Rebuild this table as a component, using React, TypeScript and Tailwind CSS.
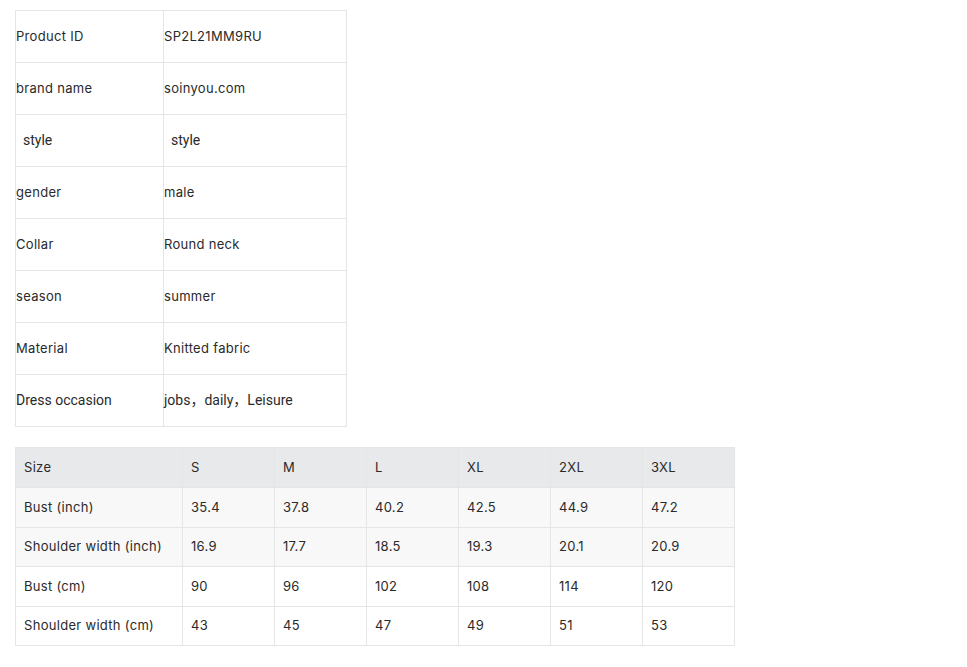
const specs: [string, string, boolean?][] = [
  ['Product ID', 'SP2L21MM9RU'],
  ['brand name', 'soinyou.com'],
  ['\u00a0\u00a0style', '\u00a0\u00a0style', true],
  ['gender', 'male'],
  ['Collar', 'Round neck'],
  ['season', 'summer'],
  ['Material', 'Knitted fabric'],
  ['Dress occasion', 'jobs，daily，Leisure', true],
];

const sizes = ['S', 'M', 'L', 'XL', '2XL', '3XL'];

const rows: { label: string; values: string[]; shaded: boolean }[] = [
  { label: 'Bust (inch)', values: ['35.4', '37.8', '40.2', '42.5', '44.9', '47.2'], shaded: true },
  { label: 'Shoulder width (inch)', values: ['16.9', '17.7', '18.5', '19.3', '20.1', '20.9'], shaded: true },
  { label: 'Bust (cm)', values: ['90', '96', '102', '108', '114', '120'], shaded: false },
  { label: 'Shoulder width (cm)', values: ['43', '45', '47', '49', '51', '53'], shaded: false },
];

const App = () => {
  return (
    <div className="min-h-screen bg-white pt-[10px] pl-[15px] text-[13px] tracking-[0.3px] text-[#2a2a2a] font-['Inter',sans-serif]">
      {/* Product specs */}
      <table className="border-collapse">
        <tbody>
          {specs.map(([k, v, alt], i) => (
            <tr key={i} className="h-[52px]">
              <td
                className={`w-[148px] border border-[#e5e5e5] p-0 align-middle ${
                  alt ? "font-['Roboto','Noto_Sans_CJK_SC',sans-serif] text-[14px] tracking-normal" : ''
                }`}
              >
                {k}
              </td>
              <td
                className={`w-[183px] border border-[#e5e5e5] p-0 align-middle ${
                  alt ? "font-['Roboto','Noto_Sans_CJK_SC',sans-serif] text-[14px] tracking-normal" : ''
                }`}
              >
                {v}
              </td>
            </tr>
          ))}
        </tbody>
      </table>

      {/* Size chart */}
      <table className="mt-[20px] border-collapse">
        <thead>
          <tr className="h-[40px] bg-[#e8e9eb]">
            <td className="w-[167px] border border-[#e5e5e5] pl-[8px]">Size</td>
            {sizes.map((s) => (
              <td key={s} className="w-[92px] border border-[#e5e5e5] pl-[8px]">
                {s}
              </td>
            ))}
          </tr>
        </thead>
        <tbody>
          {rows.map((r) => (
            <tr key={r.label} className={`h-[39.5px] ${r.shaded ? 'bg-[#f8f8f8]' : 'bg-white'}`}>
              <td className="border border-[#e5e5e5] pl-[8px]">{r.label}</td>
              {r.values.map((v, i) => (
                <td key={i} className="border border-[#e5e5e5] pl-[8px]">
                  {v}
                </td>
              ))}
            </tr>
          ))}
        </tbody>
      </table>
    </div>
  );
};

export default App;
